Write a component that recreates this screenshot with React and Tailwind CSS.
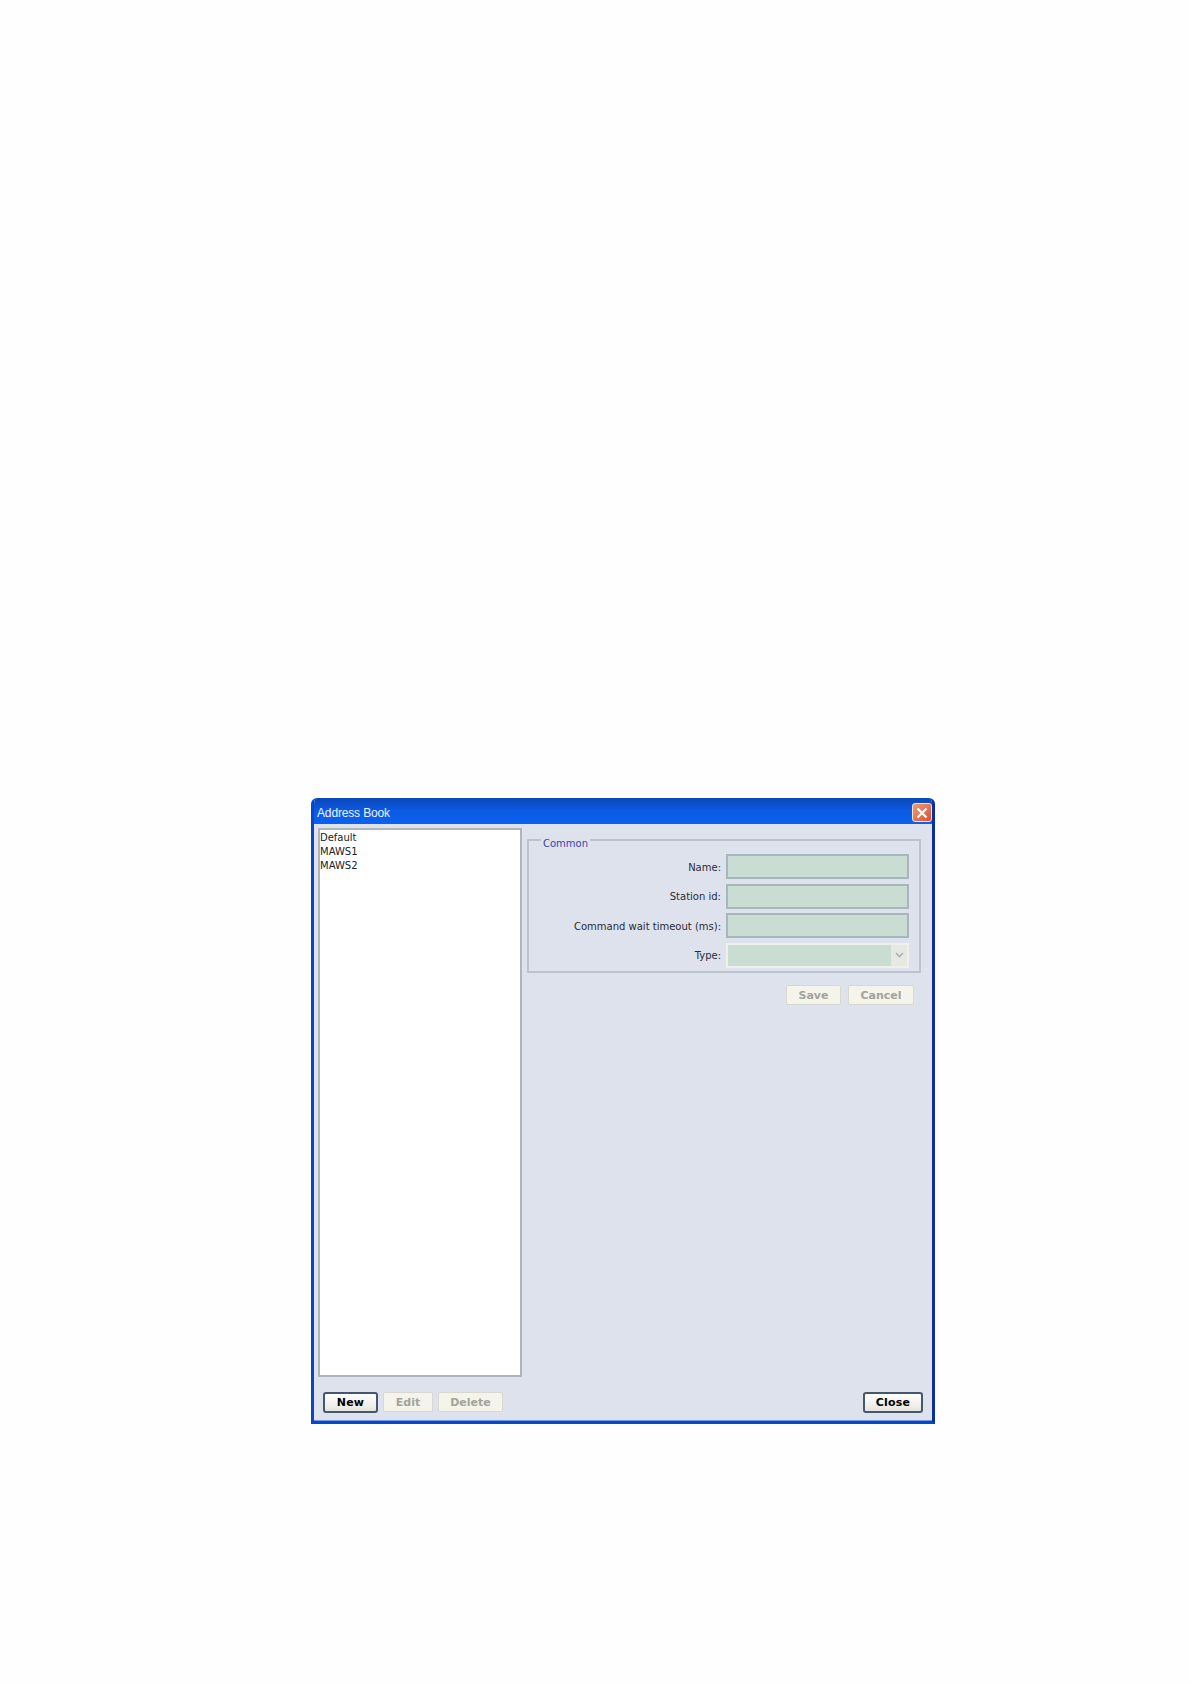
// App.jsx
// Address Book dialog, XP look

function DialogButton({ children, width, primary = false }) {
    if (primary) {
        return (
            <button className={`${width} h-[21px] rounded-[3px] border-2 border-[#47566f] bg-gradient-to-b from-white to-[#e6e6e0] text-[11px] font-bold leading-none tracking-[0.2px] text-black`}>
                {children}
            </button>
        );
    }
    return (
        <button className={`${width} h-[20px] rounded-[2px] border border-[#d8d8d0] bg-[#f4f4ea] text-[11px] font-bold leading-none text-[#a3a39a]`}>
            {children}
        </button>
    );
}

function FieldRow({ label, children }) {
    return (
        <div className="flex h-[25px] items-center justify-end gap-[5px]">
            <span className="pt-[2px] text-[10px] leading-none text-[#2a2a34]">{label}</span>
            {children}
        </div>
    );
}

function TextField() {
    return <div className="h-[25px] w-[183px] border-2 border-[#a6b6ba] bg-[#c9ddd3]" />;
}

export default function App() {
    return (
        <div className="min-h-[1684px] bg-[#fefefe] pl-[311px] pt-[798px] font-['DejaVu_Sans',sans-serif]">
            <div className="flex h-[626px] w-[624px] flex-col overflow-hidden rounded-t-[6px] border-b-[3px] border-l-[3px] border-r-[3px] border-b-[#0a46c8] border-l-[#0a46c8] border-r-[#0a2f9f]">
                {/* Title bar */}
                <div className="-mx-[3px] flex h-[26px] shrink-0 items-end justify-between bg-gradient-to-b from-[#0a47b8] via-[#0a5ae4] to-[#0a62f0] pb-[2px] pl-[6px] pr-[3px]">
                    <span className="font-['Liberation_Sans',sans-serif] text-[12px] leading-[18px] tracking-[-0.15px] text-[#eef4fd]">Address Book</span>
                    <div className="flex h-[19px] w-[20px] items-center justify-center rounded-[3px] border border-[#f0e8e0] bg-gradient-to-br from-[#ec9a7c] to-[#d8502c]">
                        <svg width="12" height="12" viewBox="0 0 12 12">
                            <path d="M1.5 1.5 L10.5 10.5 M10.5 1.5 L1.5 10.5" stroke="#fff" strokeWidth="2.2" fill="none" />
                        </svg>
                    </div>
                </div>

                {/* Body */}
                <div className="flex min-h-0 flex-1 flex-col border-b border-b-[#6a9ae8] bg-[#dee2ec]">
                    <div className="flex pl-[4px] pt-[4px]">
                        <div className="flex h-[549px] w-[204px] flex-col border-2 border-[#b0b4bc] bg-white pt-[1px] text-[10px] leading-[14px] text-[#20202a]">
                            <span>Default</span>
                            <span>MAWS1</span>
                            <span>MAWS2</span>
                        </div>

                        <div className="ml-[5px] w-[394px] pt-[2px]">
                            <fieldset className="h-[143px] rounded-[1px] border-2 border-[#bcc3cc] pl-[8px] pr-[10px]">
                                <legend className="ml-[4px] px-[2px] pt-[8px] text-[10px] leading-[12px] text-[#3a44a8]">Common</legend>
                                <div className="mt-[4px] flex flex-col gap-[4.5px]">
                                    <FieldRow label="Name:"><TextField /></FieldRow>
                                    <FieldRow label="Station id:"><TextField /></FieldRow>
                                    <FieldRow label="Command wait timeout (ms):"><TextField /></FieldRow>
                                    <FieldRow label="Type:">
                                        <div className="flex h-[25px] w-[183px] border-2 border-[#eef1ea] bg-[#c9ddd3]">
                                            <div className="flex-1" />
                                            <div className="flex w-[16px] items-center justify-center bg-[#e6e9e2]">
                                                <svg width="9" height="6" viewBox="0 0 9 6">
                                                    <path d="M1 1 L4.5 4.5 L8 1" stroke="#a9b0b0" strokeWidth="1.6" fill="none" />
                                                </svg>
                                            </div>
                                        </div>
                                    </FieldRow>
                                </div>
                            </fieldset>

                            <div className="mt-[12px] flex justify-end gap-[7px] pr-[7px]">
                                <DialogButton width="w-[55px]">Save</DialogButton>
                                <DialogButton width="w-[66px]">Cancel</DialogButton>
                            </div>
                        </div>
                    </div>

                    {/* Footer buttons */}
                    <div className="flex items-start justify-between pl-[9px] pr-[9px] pt-[15px]">
                        <div className="flex gap-[5px]">
                            <DialogButton width="w-[55px]" primary>New</DialogButton>
                            <DialogButton width="w-[50px]">Edit</DialogButton>
                            <DialogButton width="w-[65px]">Delete</DialogButton>
                        </div>
                        <DialogButton width="w-[60px]" primary>Close</DialogButton>
                    </div>
                </div>
            </div>
        </div>
    );
}
